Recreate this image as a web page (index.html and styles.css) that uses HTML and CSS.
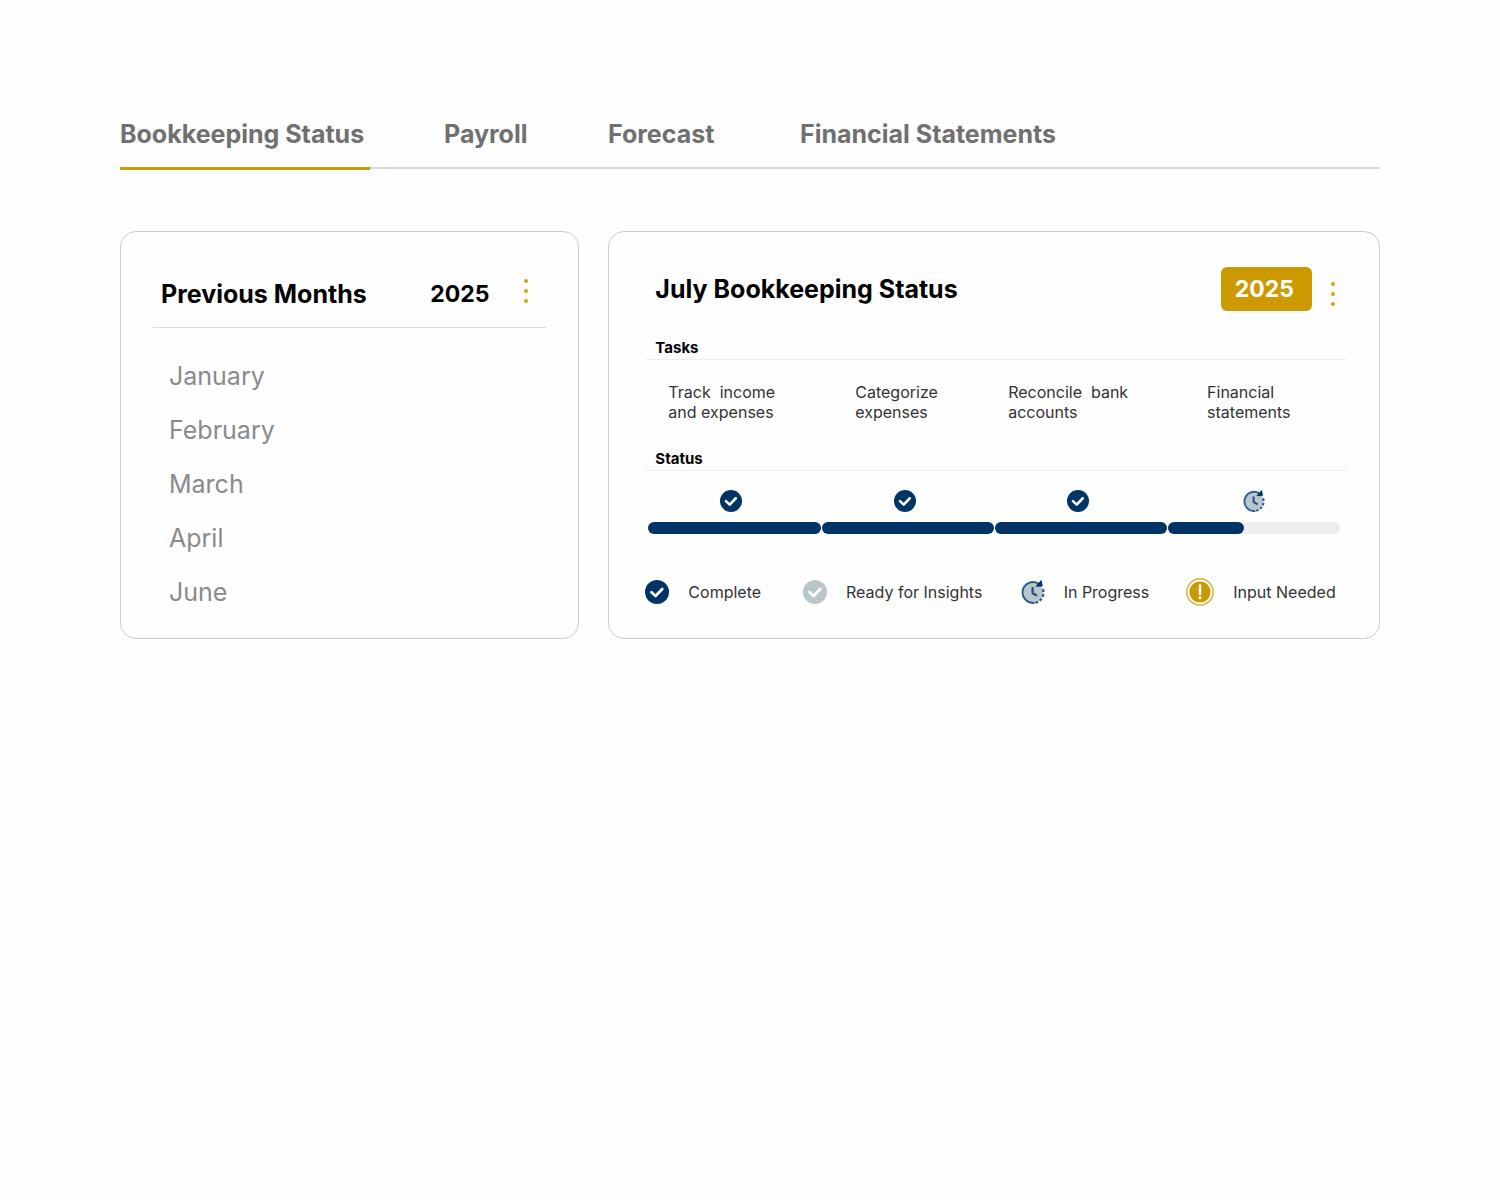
FILE: index.html
```html
<!DOCTYPE html>
<html lang="en">
  <head>
    <meta charset="UTF-8" />
    <meta name="viewport" content="width=device-width, initial-scale=1.0" />
    <title>Bookkeeping Status</title>
    <link rel="stylesheet" href="styles.css">
  </head>
  <body>
    <!-- Shared icons -->
    <svg class="sprite" aria-hidden="true">
      <symbol id="icon-check" viewBox="0 0 24 24">
        <circle cx="12" cy="12" r="12" fill="currentColor" />
        <path d="M6.5 12.2l4.1 3.8 6.6-7" fill="none" stroke="#fff" stroke-width="2.8" stroke-linecap="round" stroke-linejoin="round" />
      </symbol>
      <symbol id="icon-clock" viewBox="0 0 24 24">
        <circle cx="12" cy="12.5" r="10.5" fill="#b9c6cb" />
        <path d="M13.5 22.9A10.5 10.5 0 1 1 17.5 3.5" fill="none" stroke="#2d5c8a" stroke-width="2" />
        <path d="M21.2 7.4A10.5 10.5 0 0 1 14 22.8" fill="none" stroke="#2d5c8a" stroke-width="2.2" stroke-dasharray="2.8 2" stroke-dashoffset="-2" />
        <path d="M20.2 0.6l1 5.4-6 .2z" fill="#003366" stroke="#003366" stroke-linejoin="round" />
        <path d="M11.6 7v6.2l4.4 2.4" fill="none" stroke="#1d4f80" stroke-width="2.2" stroke-linejoin="round" />
      </symbol>
      <symbol id="icon-alert" viewBox="0 0 28 28">
        <circle cx="14" cy="14" r="13.2" fill="#fff" stroke="#d9ae33" stroke-width="1.4" />
        <circle cx="14" cy="14" r="10.6" fill="#cc9900" />
        <path d="M14 7.5v8.5" stroke="#fff" stroke-width="2.6" stroke-linecap="round" />
        <circle cx="14" cy="20" r="1.4" fill="#fff" />
      </symbol>
      <symbol id="icon-dots" viewBox="0 0 6 26">
        <circle cx="3" cy="3" r="2" fill="currentColor" />
        <circle cx="3" cy="13" r="2" fill="currentColor" />
        <circle cx="3" cy="23" r="2" fill="currentColor" />
      </symbol>
    </svg>

    <div class="page">
      <nav class="tabs">
        <button type="button" class="tab active">Bookkeeping Status</button>
        <button type="button" class="tab">Payroll</button>
        <button type="button" class="tab">Forecast</button>
        <button type="button" class="tab">Financial Statements</button>
      </nav>

      <main class="cards">
        <section class="card months">
          <header class="months-header">
            <h2>Previous Months</h2>
            <span class="year">2025</span>
            <button type="button" class="menu" aria-label="Menu"><svg><use href="#icon-dots" /></svg></button>
          </header>
          <ul class="month-list">
            <li><a href="#">January</a></li>
            <li><a href="#">February</a></li>
            <li><a href="#">March</a></li>
            <li><a href="#">April</a></li>
            <li><a href="#">June</a></li>
          </ul>
        </section>

        <section class="card status">
          <header class="status-header">
            <h2>July Bookkeeping Status</h2>
            <button type="button" class="year-button">2025</button>
            <button type="button" class="menu" aria-label="Menu"><svg><use href="#icon-dots" /></svg></button>
          </header>

          <h3>Tasks</h3>
          <div class="tasks">
            <p>Track&nbsp; income<br>and expenses</p>
            <p>Categorize<br>expenses</p>
            <p>Reconcile&nbsp; bank<br>accounts</p>
            <p>Financial<br>statements</p>
          </div>

          <h3>Status</h3>
          <div class="steps">
            <div class="step done">
              <svg class="step-icon"><use href="#icon-check" /></svg>
              <div class="bar"><div class="fill" style="width: 100%"></div></div>
            </div>
            <div class="step done">
              <svg class="step-icon"><use href="#icon-check" /></svg>
              <div class="bar"><div class="fill" style="width: 100%"></div></div>
            </div>
            <div class="step done">
              <svg class="step-icon"><use href="#icon-check" /></svg>
              <div class="bar"><div class="fill" style="width: 100%"></div></div>
            </div>
            <div class="step">
              <svg class="step-icon"><use href="#icon-clock" /></svg>
              <div class="bar"><div class="fill" style="width: 44%"></div></div>
            </div>
          </div>

          <ul class="legend">
            <li class="complete"><svg><use href="#icon-check" /></svg>Complete</li>
            <li class="ready"><svg><use href="#icon-check" /></svg>Ready for Insights</li>
            <li><svg><use href="#icon-clock" /></svg>In Progress</li>
            <li class="needed"><svg><use href="#icon-alert" /></svg>Input Needed</li>
          </ul>
        </section>
      </main>
    </div>
  </body>
</html>
```
FILE: styles.css
```css
* {
  box-sizing: border-box;
}
body {
  margin: 0;
  background: #fefefe;
  color: #000;
  font-family: Inter, "Open Sans", sans-serif;
}
h2,
h3,
p,
ul {
  margin: 0;
  padding: 0;
}
ul {
  list-style: none;
}
button {
  padding: 0;
  border: none;
  background: none;
  font-family: inherit;
  cursor: pointer;
}
.sprite {
  display: none;
}
.page {
  padding: 115px 120px 40px;
}

/* Tabs */
.tabs {
  display: grid;
  grid-template-columns: 250px 90px 118px auto;
  column-gap: 74px;
  border-bottom: 2px solid #d9d9d9;
}
.tab {
  height: 55px;
  margin-bottom: -3px;
  padding-bottom: 14px;
  border-bottom: 3px solid transparent;
  color: #707070;
  font-size: 25px;
  font-weight: 700;
  line-height: 36px;
  text-align: left;
  white-space: nowrap;
}
.tab.active {
  border-color: #cc9900;
}

/* Cards */
.cards {
  display: grid;
  grid-template-columns: 459fr 771fr;
  gap: 29px;
  margin-top: 62px;
}
.card {
  border: 1px solid #cccccc;
  border-radius: 16px;
}
h2 {
  font-size: 25px;
  font-weight: 700;
  line-height: 36px;
}
.year,
.year-button {
  font-size: 23px;
  font-weight: 700;
  line-height: 36px;
}
.menu {
  color: #d9a30f;
}
.menu svg {
  display: block;
  width: 6px;
  height: 26px;
}

/* Previous months */
.months {
  padding: 44px 32px 19px;
}
.months-header {
  display: flex;
  align-items: center;
  padding: 0 17px 15px 8px;
  border-bottom: 1px solid #dddddd;
}
.months-header .year {
  margin-left: auto;
  margin-right: 34px;
}
.months-header .menu {
  padding-bottom: 6px;
}
.month-list {
  padding: 21px 16px 0;
}
.month-list a {
  display: block;
  color: #8a8a8a;
  font-size: 25px;
  line-height: 54px;
  text-decoration: none;
}

/* Status of the month */
.status {
  padding: 35px 32px 28px 36px;
}
.status-header {
  display: flex;
  align-items: center;
  padding: 0 11px 0 10px;
}
.status-header .menu {
  padding-top: 10px;
}
.year-button {
  height: 44px;
  margin-left: auto;
  margin-right: 18px;
  padding: 0 18px 0 14px;
  border-radius: 6px;
  background: #cc9900;
  color: #fff;
}
h3 {
  padding-left: 10px;
  border-bottom: 1px solid #eeeeee;
  font-size: 15px;
  font-weight: 700;
  line-height: 22px;
}
.status-header + h3 {
  margin-top: 26px;
}
.tasks {
  display: grid;
  grid-template-columns: 187fr 153fr 199fr 140fr;
  padding: 22px 0 26px 23px;
  color: #333;
  font-size: 16px;
  line-height: 20px;
}
.steps {
  display: grid;
  grid-template-columns: repeat(4, 1fr);
  gap: 1px;
  padding: 19px 7px 0 3px;
}
.step-icon {
  display: block;
  width: 22px;
  height: 22px;
  margin: 0 auto 10px;
  color: #003366;
}
.done {
  position: relative;
}
.done .step-icon {
  transform: translateX(-3px);
}
.bar {
  height: 12px;
  border-radius: 6px;
  background: #eeeeee;
}
.fill {
  height: 12px;
  border-radius: 6px;
  background: #003366;
}

/* Legend */
.legend {
  display: grid;
  grid-template-columns: 158fr 218fr 166fr 161fr;
  margin-top: 44px;
  color: #333;
  font-size: 16px;
  line-height: 28px;
}
.legend li {
  display: flex;
  align-items: center;
  gap: 19px;
  white-space: nowrap;
}
.legend svg {
  width: 24px;
  height: 24px;
}
.complete svg {
  color: #003366;
}
.ready svg {
  color: #b9c6cb;
}
.legend .needed svg {
  width: 28px;
  height: 28px;
}
```
